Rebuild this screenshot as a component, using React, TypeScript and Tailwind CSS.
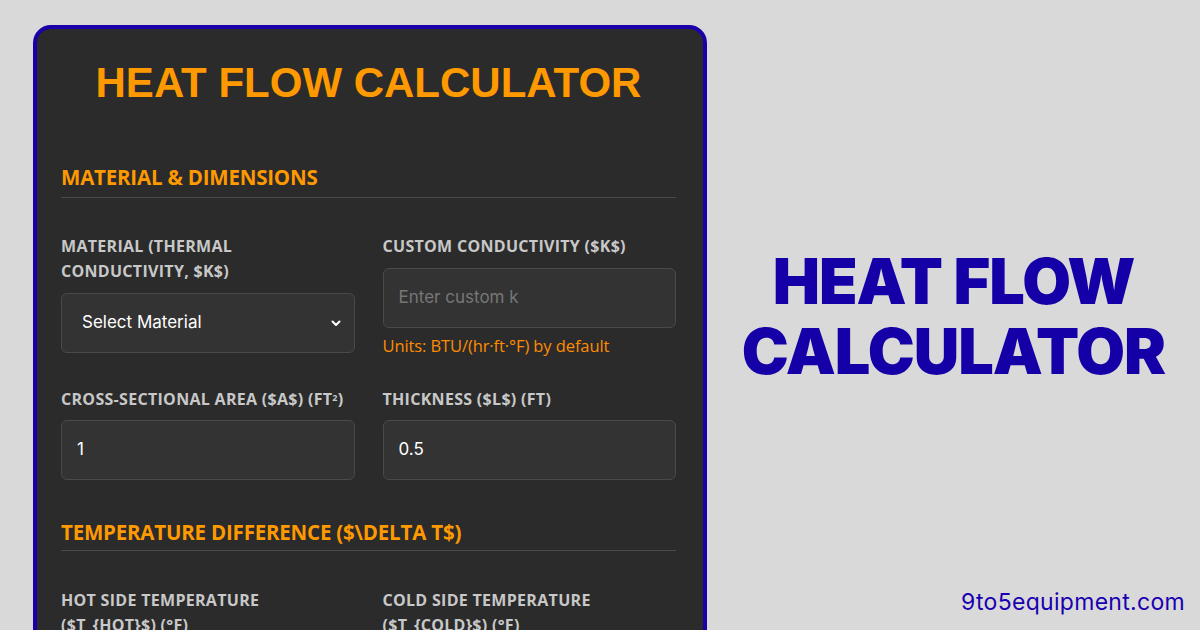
import React from "react";

const labelCls =
  "block text-[16px] font-bold uppercase tracking-[0.3px] leading-[25px] text-[#c8c8c8]";
const boxCls =
  "w-full h-[60px] flex items-center bg-[#333333] border border-[#4a4a4a] rounded-md text-[17px] font-['Inter',sans-serif]";

function SectionTitle({ children, pad = "pb-[7px]" }: { children: React.ReactNode; pad?: string }) {
  return (
    <div className={`border-b border-[#4a4a4a] ${pad}`}>
      <h2 className="text-[20.5px] font-bold uppercase text-[#ff9900] tracking-[-0.2px] leading-[26px]">
        {children}
      </h2>
    </div>
  );
}

function Field({ label, children }: { label: React.ReactNode; children: React.ReactNode }) {
  return (
    <div className="flex flex-col">
      <label className={labelCls}>{label}</label>
      <div className="mt-[8px]">{children}</div>
    </div>
  );
}

export default function App() {
  return (
    <div
      className="w-[1200px] h-[630px] overflow-hidden bg-[#d9d9d9] flex"
      style={{ fontFamily: "'Open Sans', 'Noto Sans', sans-serif" }}
    >
      <div className="ml-[33px] mt-[25px] w-[674px] h-[640px] shrink-0 rounded-[18px] border-4 border-[#1a00a8] bg-[#2b2b2b] pl-[24px] pr-[27px] pt-[26px]">
        <h1 className="text-center text-[42px] font-bold text-[#ff9900] leading-[56px] font-['Liberation_Sans',Arial,sans-serif]">
          HEAT FLOW CALCULATOR
        </h1>

        <div className="mt-[53px]">
          <SectionTitle>Material &amp; Dimensions</SectionTitle>
        </div>

        <div className="mt-[36px] grid grid-cols-2 gap-x-[28px]">
          <div className="flex flex-col">
            <label className={labelCls}>
              Material (Thermal
              <br />
              Conductivity, $k$)
            </label>
            <div className="mt-[9px]">
              <div className={`${boxCls} justify-between pl-5 pr-3 text-white`}>
                <span>Select Material</span>
                <svg width="12" height="12" viewBox="0 0 12 12" fill="none">
                  <path d="M2.5 4.5 6 8l3.5-3.5" stroke="#ffffff" strokeWidth="2" strokeLinecap="round" strokeLinejoin="round" />
                </svg>
              </div>
            </div>
          </div>
          <div className="flex flex-col">
            <label className={labelCls}>Custom Conductivity ($k$)</label>
            <div className="mt-[9px]">
              <div className={`${boxCls} h-[58px] px-[15px] text-[#777777]`}>Enter custom k</div>
            </div>
            <p className="mt-[7px] text-[16.5px] text-[#ff8c00] leading-[22px] tracking-[-0.1px]">
              Units: BTU/(hr·ft·°F) by default
            </p>
          </div>
        </div>

        <div className="mt-[30px] grid grid-cols-2 gap-x-[28px]">
          <Field
            label={
              <>
                Cross-Sectional Area ($A$) (ft<sup className="text-[9px]">2</sup>)
              </>
            }
          >
            <div className={`${boxCls} h-[59px] px-[15px] text-white`}>1</div>
          </Field>
          <Field label="Thickness ($L$) (ft)">
            <div className={`${boxCls} h-[59px] px-[15px] text-white`}>0.5</div>
          </Field>
        </div>

        <div className="mt-[39px]">
          <SectionTitle pad="pb-[5px]">Temperature Difference ($\Delta T$)</SectionTitle>
        </div>

        <div className="mt-[37px] grid grid-cols-2 gap-x-[28px]">
          <label className={labelCls}>
            Hot Side Temperature
            <br />
            ($T_{"{hot}"}$) (°F)
          </label>
          <label className={labelCls}>
            Cold Side Temperature
            <br />
            ($T_{"{cold}"}$) (°F)
          </label>
        </div>
      </div>

      <div className="flex-1 flex flex-col items-center">
        <div className="mt-[246px] text-center text-[#1500a8] font-black text-[63px] leading-[70px] tracking-[-1px] font-['Inter',sans-serif]">
          HEAT FLOW
          <br />
          CALCULATOR
        </div>
        <div className="mt-auto mb-[11px] self-end mr-[15px] text-[23px] tracking-[0.3px] text-[#1a00b0] font-['Inter',sans-serif]">
          9to5equipment.com
        </div>
      </div>
    </div>
  );
}
